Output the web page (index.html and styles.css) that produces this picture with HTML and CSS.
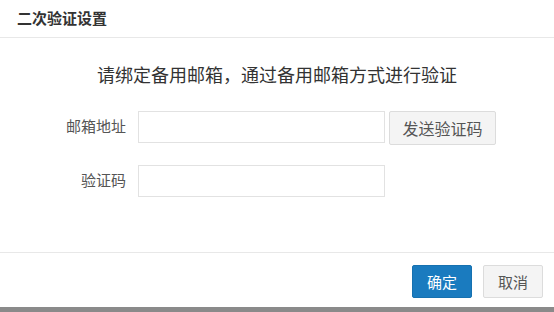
FILE: index.html
```html
<!DOCTYPE html>
<html lang="zh-CN">
<head>
    <meta charset="UTF-8">
    <meta name="viewport" content="width=device-width, initial-scale=1.0">
    <title>二次验证设置</title>
    <link rel="stylesheet" href="styles.css">
</head>
<body>
    <div class="dialog">
        <div class="dialog-header">
            <h3 class="dialog-title">二次验证设置</h3>
        </div>
        <div class="dialog-body">
            <p class="tip">请绑定备用邮箱，通过备用邮箱方式进行验证</p>
            <div class="form-row">
                <label class="form-label">邮箱地址</label>
                <input class="form-input" type="text">
                <button class="btn btn-default btn-send">发送验证码</button>
            </div>
            <div class="form-row">
                <label class="form-label">验证码</label>
                <input class="form-input" type="text">
            </div>
        </div>
        <div class="dialog-footer">
            <button class="btn btn-primary">确定</button>
            <button class="btn btn-default">取消</button>
        </div>
    </div>
</body>
</html>
```

FILE: styles.css
```css
html, body {
    margin: 0;
    padding: 0;
}
body {
    width: 554px;
    height: 312px;
    background: #8a8a8a;
    font-family: "Liberation Sans", "Noto Sans CJK SC", sans-serif;
    color: #333;
}
.dialog {
    height: 307px;
    background: #fff;
    display: flex;
    flex-direction: column;
}
.dialog-header {
    height: 38px;
    box-sizing: border-box;
    border-bottom: 1px solid #e8e8e8;
    padding: 0 17px;
    display: flex;
    align-items: center;
}
.dialog-title {
    margin: 0 0 3px;
    font-size: 15px;
    font-weight: bold;
    color: #333;
}
.dialog-body {
    flex: 1;
    padding-top: 26px;
}
.tip {
    margin: 0 0 22px;
    text-align: center;
    font-size: 18px;
    line-height: 25px;
    color: #333;
}
.form-row {
    display: flex;
    align-items: flex-start;
    margin-bottom: 20px;
    height: 34px;
}
.form-label {
    width: 80px;
    margin-left: 46px;
    margin-right: 12px;
    text-align: right;
    font-size: 15px;
    line-height: 32px;
    color: #555;
}
.form-input {
    width: 247px;
    height: 32px;
    box-sizing: border-box;
    border: 1px solid #e2e2e2;
    padding: 0 8px;
    margin: 0;
    outline: none;
}
.btn {
    font-family: inherit;
    font-size: 15px;
    height: 33px;
    padding: 0;
    border-radius: 2px;
    cursor: pointer;
}
.btn-default {
    background: #f4f4f4;
    border: 1px solid #dcdcdc;
    color: #555;
}
.btn-send {
    width: 107px;
    height: 34px;
    margin-left: 4px;
    font-size: 16px;
}
.btn-primary {
    background: #1a7bbf;
    border: 1px solid #1671b0;
    color: #fff;
}
.dialog-footer {
    height: 55px;
    box-sizing: border-box;
    border-top: 1px solid #e8e8e8;
    padding: 12px 11px 0 0;
    display: flex;
    justify-content: flex-end;
    gap: 11px;
}
.dialog-footer .btn {
    width: 60px;
}
```
